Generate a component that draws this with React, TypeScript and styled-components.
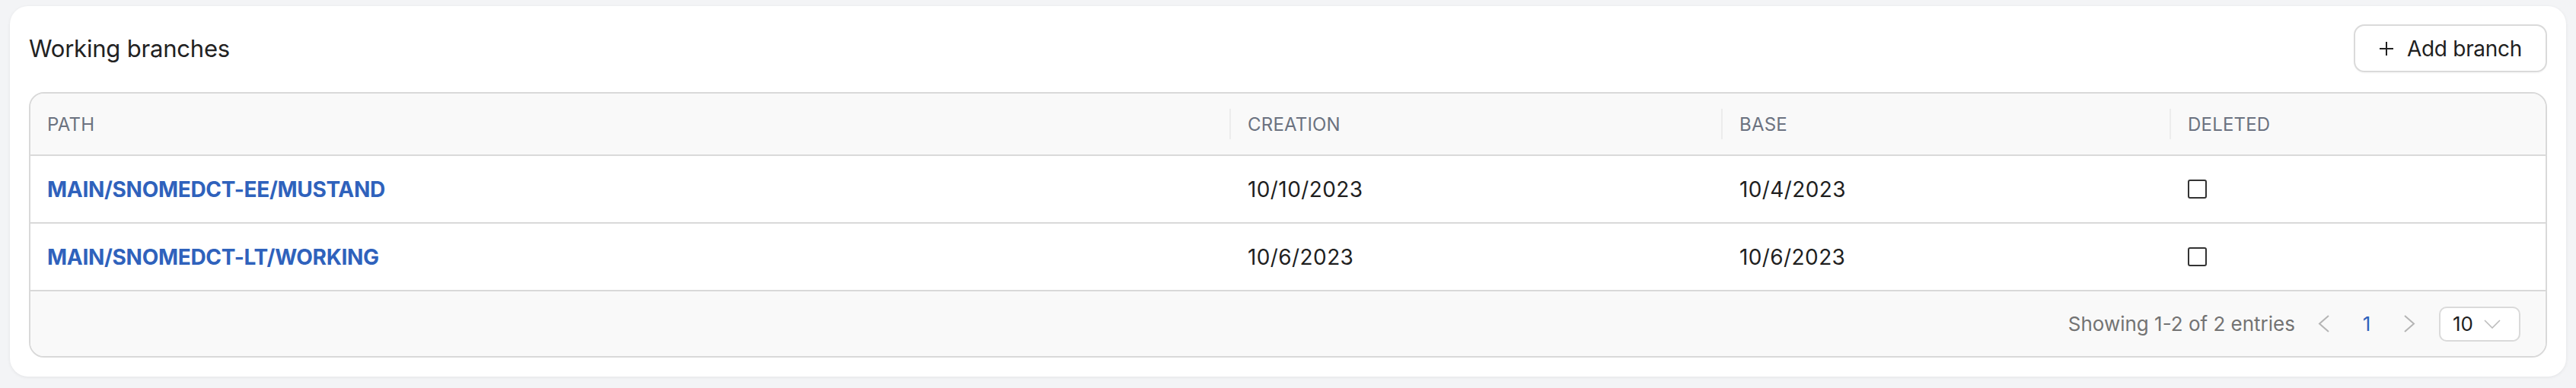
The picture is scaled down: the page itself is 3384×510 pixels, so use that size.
import React from "react";
import styled, { createGlobalStyle } from "styled-components";

const GlobalStyle = createGlobalStyle`
  html, body { margin: 0; padding: 0; background: #f3f4f6; }
  body { font-family: Inter, "Liberation Sans", sans-serif; color: #1f1f1f; }
  * { box-sizing: border-box; }
`;

const Page = styled.div`
  padding: 8px 13px 15px;
`;

const Card = styled.section`
  background: #ffffff;
  border-radius: 24px;
  padding: 24px 25px 25px;
  box-shadow: 0 1px 4px rgba(0, 0, 0, 0.07);
`;

const CardHeader = styled.div`
  display: flex;
  align-items: center;
  justify-content: space-between;
  height: 63px;
  margin-bottom: 26px;
`;

const Title = styled.h2`
  margin: 0;
  font-size: 31px;
  font-weight: 400;
  color: #222222;
  letter-spacing: -0.2px;
`;

const AddButton = styled.button`
  display: flex;
  align-items: center;
  gap: 17px;
  height: 63px;
  padding: 0 31px 0 31px;
  background: #ffffff;
  border: 2px solid #dadada;
  border-radius: 14px;
  box-shadow: 0 2px 0 rgba(0, 0, 0, 0.02);
  font-family: inherit;
  font-size: 28px;
  letter-spacing: -0.3px;
  color: #1f1f1f;
  cursor: pointer;
`;

const Table = styled.div`
  border: 2px solid #d9d9d9;
  border-radius: 20px;
  overflow: hidden;
`;

const Row = styled.div<{ $kind: "head" | "body" }>`
  display: grid;
  grid-template-columns: 1575px 646px 589px 1fr;
  height: ${(p) => (p.$kind === "head" ? 82 : 89)}px;
  background: ${(p) => (p.$kind === "head" ? "#f9f9f9" : "#ffffff")};
  border-bottom: 2px solid #d9d9d9;
`;

const HeadCell = styled.div<{ $divider?: boolean }>`
  position: relative;
  display: flex;
  align-items: center;
  padding: 0 24px;
  font-size: 24px;
  color: #6b7280;
  text-transform: uppercase;
  letter-spacing: 0.2px;

  &:first-child {
    padding-left: 22px;
  }

  &::before {
    content: "";
    display: ${(p) => (p.$divider ? "block" : "none")};
    position: absolute;
    left: 0;
    top: 50%;
    width: 2px;
    height: 40px;
    transform: translateY(-50%);
    background: #ececec;
  }
`;

const Cell = styled.div`
  display: flex;
  align-items: center;
  padding: 0 24px;
  font-size: 28px;
  letter-spacing: 0.4px;
  color: #1f1f1f;

  &:first-child {
    padding-left: 22px;
  }
`;

const PathLink = styled.a`
  font-weight: 700;
  font-size: 28px;
  color: #2f62bc;
  text-decoration: none;
  text-transform: uppercase;
  letter-spacing: -0.3px;
`;

const Checkbox = styled.span`
  display: inline-block;
  width: 25px;
  height: 25px;
  border: 2.5px solid #333333;
  border-radius: 3px;
  background: #ffffff;
`;

const Footer = styled.div`
  display: flex;
  align-items: center;
  justify-content: flex-end;
  height: 85px;
  padding-right: 33px;
  background: #f9f9f9;
`;

const Summary = styled.span`
  font-size: 26px;
  color: #737373;
  margin-right: 10px;
`;

const PageButton = styled.button<{ $active?: boolean }>`
  display: flex;
  align-items: center;
  justify-content: center;
  width: 56px;
  height: 46px;
  padding: 0;
  border: none;
  background: transparent;
  font-family: inherit;
  font-size: 26px;
  color: ${(p) => (p.$active ? "#2f62bc" : "#b5b5b5")};
`;

const SizeSelect = styled.div`
  display: flex;
  align-items: center;
  gap: 14px;
  margin-left: 11px;
  width: 107px;
  height: 46px;
  padding-left: 16px;
  border: 2px solid #dadada;
  border-radius: 10px;
  background: #ffffff;
  font-size: 26px;
  color: #1f1f1f;
`;

const PlusIcon = () => (
  <svg width="20" height="20" viewBox="0 0 20 20" fill="none">
    <path d="M10 1v18M1 10h18" stroke="#222" strokeWidth="2" />
  </svg>
);

const Chevron = ({ dir }: { dir: "left" | "right" | "down" }) => {
  if (dir === "down") {
    return (
      <svg width="22" height="12" viewBox="0 0 22 12" fill="none">
        <path d="M1 1l10 10L21 1" stroke="#bdbdbd" strokeWidth="1.6" />
      </svg>
    );
  }
  const d = dir === "left" ? "M14 1L2 11.5 14 22" : "M2 1l12 10.5L2 22";
  return (
    <svg width="16" height="23" viewBox="0 0 16 23" fill="none">
      <path d={d} stroke="#b5b5b5" strokeWidth="2" />
    </svg>
  );
};

const rows = [
  { path: "MAIN/SNOMEDCT-EE/MUSTAND", creation: "10/10/2023", base: "10/4/2023" },
  { path: "MAIN/SNOMEDCT-LT/WORKING", creation: "10/6/2023", base: "10/6/2023" },
];

export default function App() {
  return (
    <>
      <GlobalStyle />
      <Page>
        <Card>
          <CardHeader>
            <Title>Working branches</Title>
            <AddButton>
              <PlusIcon />
              Add branch
            </AddButton>
          </CardHeader>
          <Table>
            <Row $kind="head">
              <HeadCell>Path</HeadCell>
              <HeadCell $divider>Creation</HeadCell>
              <HeadCell $divider>Base</HeadCell>
              <HeadCell $divider>Deleted</HeadCell>
            </Row>
            {rows.map((r) => (
              <Row $kind="body" key={r.path}>
                <Cell>
                  <PathLink href="#">{r.path}</PathLink>
                </Cell>
                <Cell>{r.creation}</Cell>
                <Cell>{r.base}</Cell>
                <Cell>
                  <Checkbox />
                </Cell>
              </Row>
            ))}
            <Footer>
              <Summary>Showing 1-2 of 2 entries</Summary>
              <PageButton aria-label="Previous page">
                <Chevron dir="left" />
              </PageButton>
              <PageButton $active>1</PageButton>
              <PageButton aria-label="Next page">
                <Chevron dir="right" />
              </PageButton>
              <SizeSelect>
                10
                <Chevron dir="down" />
              </SizeSelect>
            </Footer>
          </Table>
        </Card>
      </Page>
    </>
  );
}
